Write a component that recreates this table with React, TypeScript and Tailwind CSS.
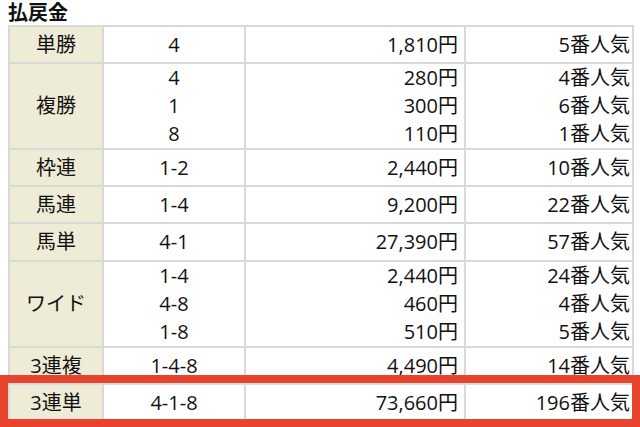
const rows = [
  { kind: "単勝", h: "h-[35px]", items: [["4", "1,810円", "5番人気"]] },
  {
    kind: "複勝",
    h: "h-[84px]",
    items: [
      ["4", "280円", "4番人気"],
      ["1", "300円", "6番人気"],
      ["8", "110円", "1番人気"],
    ],
  },
  { kind: "枠連", h: "h-[35px]", items: [["1-2", "2,440円", "10番人気"]] },
  { kind: "馬連", h: "h-[35px]", items: [["1-4", "9,200円", "22番人気"]] },
  { kind: "馬単", h: "h-[36px]", items: [["4-1", "27,390円", "57番人気"]] },
  {
    kind: "ワイド",
    h: "h-[84px]",
    items: [
      ["1-4", "2,440円", "24番人気"],
      ["4-8", "460円", "4番人気"],
      ["1-8", "510円", "5番人気"],
    ],
  },
  { kind: "3連複", h: "h-[35px]", items: [["1-4-8", "4,490円", "14番人気"]] },
  { kind: "3連単", h: "h-[35px]", items: [["4-1-8", "73,660円", "196番人気"]] },
];

export default function App() {
  return (
    <div
      className="relative w-[640px] h-[427px] overflow-hidden bg-white text-[#111] text-[20px] leading-[28px]"
      style={{ fontFamily: '"Open Sans", "Noto Sans CJK JP", sans-serif' }}
    >
      <h2 className="h-[25px] pl-[8px] text-[20px] leading-[25px] font-bold">払戻金</h2>

      <div className="ml-[8px] w-[626px] grid grid-cols-[92px_140px_218px_166px] gap-[2px] p-[2px] bg-[#d9d9d9]">
        {rows.map((row) => (
          <div key={row.kind} className="contents">
            <div className={`${row.h} bg-[#eeecd6] flex items-center justify-center`}>
              {row.kind}
            </div>
            <div className={`${row.h} bg-white flex flex-col justify-center items-center`}>
              {row.items.map((it, i) => (
                <span key={i}>{it[0]}</span>
              ))}
            </div>
            <div className={`${row.h} bg-white flex flex-col justify-center items-end pr-[6px]`}>
              {row.items.map((it, i) => (
                <span key={i}>{it[1]}</span>
              ))}
            </div>
            <div className={`${row.h} bg-white flex flex-col justify-center items-end pr-[2px]`}>
              {row.items.map((it, i) => (
                <span key={i}>{it[2]}</span>
              ))}
            </div>
          </div>
        ))}
      </div>

      {/* highlight */}
      <div className="absolute left-0 top-[375px] w-[640px] h-[52px] border-[8px] border-[#e8432d]" />
    </div>
  );
}
